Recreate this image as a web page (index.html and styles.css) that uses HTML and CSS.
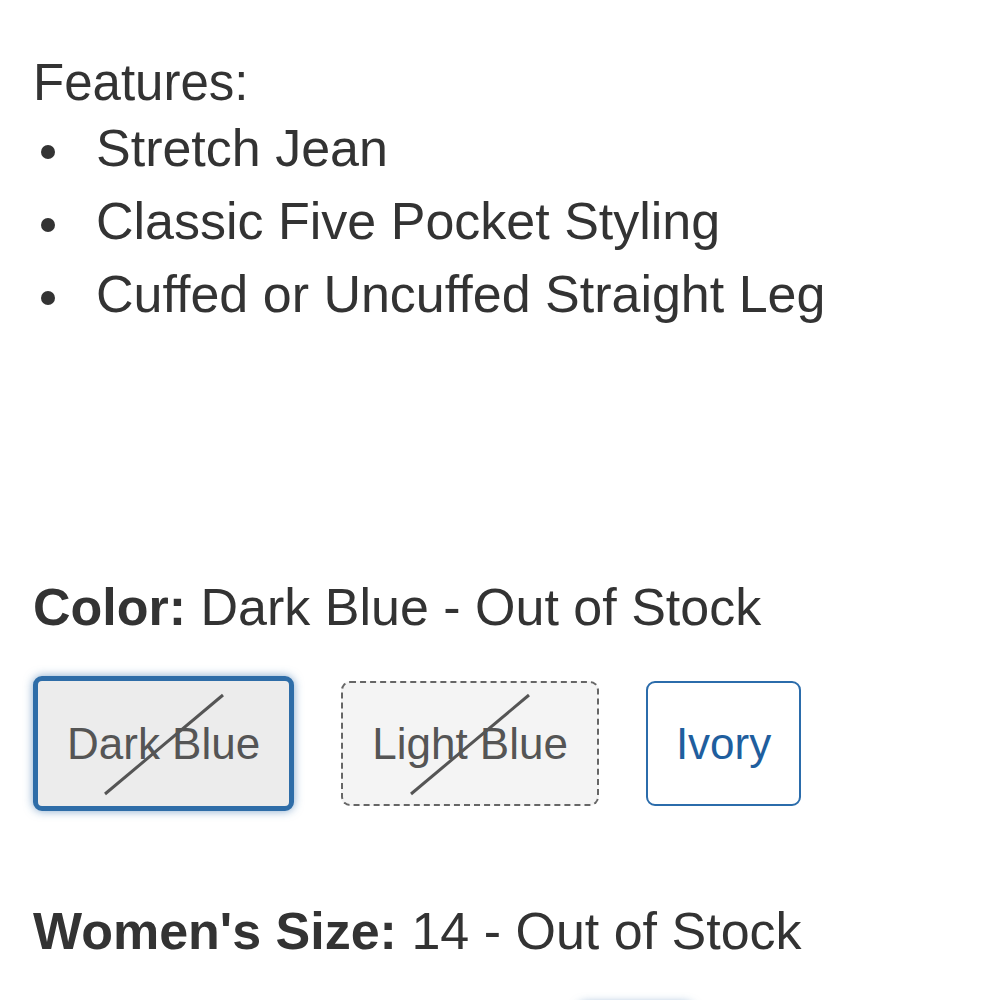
FILE: index.html
```html
<!DOCTYPE html>
<html lang="en">
<head>
    <meta charset="UTF-8">
    <meta name="viewport" content="width=device-width, initial-scale=1.0">
    <title>Stretch Jean</title>
    <link rel="stylesheet" href="styles.css">
</head>
<body>
    <div class="product">
        <p class="features-title">Features:</p>
        <ul class="features">
            <li>Stretch Jean</li>
            <li>Classic Five Pocket Styling</li>
            <li>Cuffed or Uncuffed Straight Leg</li>
        </ul>

        <div class="option">
            <div class="option-label"><strong>Color:</strong> Dark Blue - Out of Stock</div>
            <div class="swatches">
                <button class="swatch selected soldout">Dark Blue</button>
                <button class="swatch soldout dashed">Light Blue</button>
                <button class="swatch available">Ivory</button>
            </div>
        </div>

        <div class="option option-size">
            <div class="option-label"><strong>Women's Size:</strong> 14 - Out of Stock</div>
            <div class="swatches">
                <button class="swatch available">2</button>
                <button class="swatch available">4</button>
                <button class="swatch available">6</button>
                <button class="swatch available">8</button>
                <button class="swatch selected soldout">14</button>
            </div>
        </div>
    </div>
</body>
</html>
```

FILE: styles.css
```css
* {
    margin: 0;
    padding: 0;
    box-sizing: border-box;
}
body {
    font-family: 'Liberation Sans', Arial, sans-serif;
    background: #fff;
    color: #333;
}
.product {
    padding: 53px 20px 40px 33px;
}
.features-title {
    font-size: 51px;
    line-height: 59px;
}
.features {
    list-style: none;
    font-size: 52px;
    line-height: 73px;
}
.features li {
    padding-left: 63px;
    text-indent: -55px;
}
.features li::before {
    content: "";
    display: inline-block;
    width: 14px;
    height: 14px;
    border-radius: 50%;
    background: #333;
    margin-right: 41px;
    vertical-align: 7px;
}
.option {
    margin-top: 240px;
}
.option-size {
    margin-top: 84px;
}
.option-label {
    font-size: 52px;
    line-height: 73px;
}
.option-label strong {
    font-weight: bold;
}
.swatches {
    display: flex;
    align-items: center;
    gap: 47px;
    margin-top: 32px;
}
.option-size .swatches {
    margin-top: 35px;
}
.swatch {
    position: relative;
    font-family: inherit;
    font-size: 44px;
    line-height: 53px;
    padding: 34px 28px;
    border: 2px solid #2b6cab;
    border-radius: 9px;
    background: #fff;
    color: #1f5e9e;
    min-width: 89px;
}
.swatch.soldout {
    color: #555;
    background: #f4f4f4;
}
.swatch.dashed {
    padding: 34px 29px;
    border: 2px dashed #666;
}
.swatch.selected {
    padding: 36px 29px;
    border: 5px solid #2e6da8;
    background: #ececec;
    box-shadow: 0 0 10px rgba(46, 109, 168, 0.6);
}
/* diagonal strike across unavailable options */
.swatch.soldout::after {
    content: "";
    position: absolute;
    left: 50%;
    top: 50%;
    width: 154px;
    height: 3px;
    margin-left: -77px;
    margin-top: -1px;
    background: #555;
    transform: rotate(-40deg);
}
```
